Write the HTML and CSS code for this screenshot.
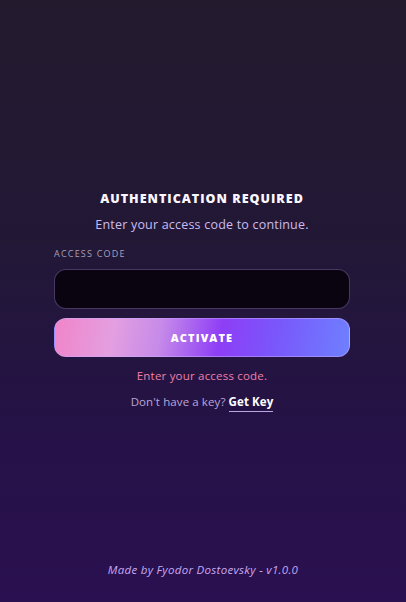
FILE: index.html
```html
<!DOCTYPE html>
<html lang="en">
<head>
  <meta charset="UTF-8" />
  <meta name="viewport" content="width=device-width, initial-scale=1.0"/>
  <title>Authentication Required</title>
  <link rel="stylesheet" href="styles.css">
</head>
<body>

  <main class="auth">
    <div class="auth-box">
      <h1>AUTHENTICATION REQUIRED</h1>
      <p class="sub">Enter your access code to continue.</p>

      <label for="code">ACCESS CODE</label>
      <input id="code" type="password" autocomplete="off">

      <button type="button">ACTIVATE</button>

      <p class="error">Enter your access code.</p>
      <p class="getkey">Don't have a key? <a href="#">Get Key</a></p>
    </div>
  </main>

  <footer>Made by Fyodor Dostoevsky - v1.0.0</footer>

</body>
</html>
```

FILE: styles.css
```css
html, body {
  height: 100%;
}

body {
  margin: 0;
  font-family: 'Open Sans', 'Noto Sans', sans-serif;
  color: #fff;
  background: linear-gradient(180deg, #231a2e 0%, #221836 40%, #251246 70%, #2a1050 100%);
  display: flex;
  flex-direction: column;
}

.auth {
  flex: 1;
  display: flex;
  align-items: center;
  justify-content: center;
  padding-top: 37px;
}

.auth-box {
  width: 296px;
  margin-left: -2px;
  text-align: center;
}

h1 {
  margin: 0;
  font-size: 12.5px;
  font-weight: 800;
  letter-spacing: 1px;
  color: #fbf6ff;
}

.sub {
  margin: 9px 0 0;
  font-size: 12.5px;
  letter-spacing: 0.2px;
  color: #cbbcef;
}

label {
  display: block;
  margin-top: 14px;
  text-align: left;
  font-size: 9px;
  letter-spacing: 1.2px;
  color: #aa9fb8;
}

input {
  box-sizing: border-box;
  display: block;
  width: 100%;
  height: 40px;
  margin-top: 9px;
  border: 1px solid rgba(150, 120, 200, 0.45);
  border-radius: 12px;
  background: #09040f;
  color: #fff;
  outline: none;
}

/* pink -> lavender -> violet -> blue */
button {
  display: block;
  width: 100%;
  height: 39px;
  margin-top: 9px;
  border: 1px solid rgba(200, 170, 255, 0.5);
  border-radius: 12px;
  background: linear-gradient(100deg, #f184c9 0%, #e39fe0 20%, #c68ae9 36%, #8e3ef6 56%, #7a56fb 74%, #6e80ff 100%);
  color: #fff;
  font-family: inherit;
  font-size: 11px;
  font-weight: 800;
  letter-spacing: 1.1px;
  cursor: pointer;
}

.error {
  margin: 11px 0 0;
  font-size: 11.5px;
  letter-spacing: 0.2px;
  color: #ef7fa8;
}

.getkey {
  margin: 11px 0 0;
  font-size: 11.5px;
  letter-spacing: 0.1px;
  color: #b9a7d6;
}

.getkey a {
  color: #fff;
  font-weight: 700;
  text-decoration: none;
  border-bottom: 1px solid #b9a7e0;
  padding-bottom: 2px;
}

footer {
  text-align: center;
  font-size: 11.5px;
  font-style: italic;
  letter-spacing: 0.3px;
  color: #c7a9ef;
  padding-bottom: 25px;
}
```
